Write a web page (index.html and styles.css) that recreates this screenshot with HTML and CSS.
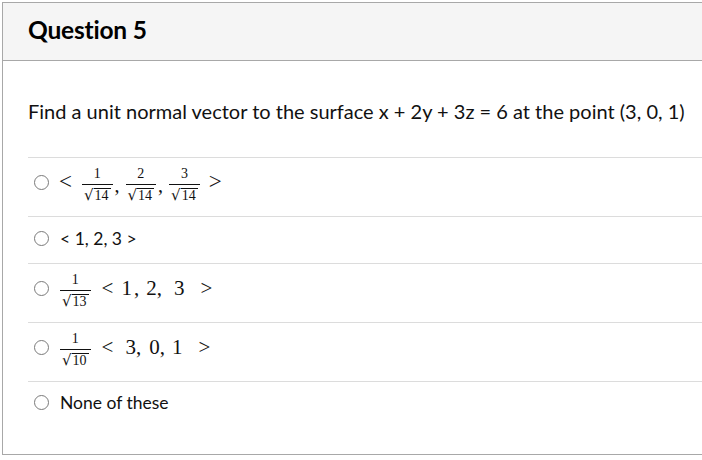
FILE: index.html
```html
<!DOCTYPE html>
<html>
<head>
<meta charset="utf-8">
<link rel="stylesheet" href="styles.css">
</head>
<body>
<div class="quiz">
  <div class="header"><h2 class="title">Question 5</h2></div>
  <div class="content">
    <p class="question">Find a unit normal vector to the surface x + 2y + 3z = 6 at the point (3, 0, 1)</p>
    <div class="answers">
      <div class="answer tall">
        <span class="radio"></span>
        <span class="math">
          <span class="op lt">&lt;</span>
          <span class="frac"><span class="num">1</span><span class="den"><span class="rad">√</span><span class="under">14</span></span></span><span class="comma">,</span>
          <span class="frac"><span class="num">2</span><span class="den"><span class="rad">√</span><span class="under">14</span></span></span><span class="comma">,</span>
          <span class="frac"><span class="num">3</span><span class="den"><span class="rad">√</span><span class="under">14</span></span></span>
          <span class="op gt">&gt;</span>
        </span>
      </div>
      <div class="answer short">
        <span class="radio"></span>
        <span class="label">&lt; 1, 2, 3 &gt;</span>
      </div>
      <div class="answer tall">
        <span class="radio"></span>
        <span class="math">
          <span class="frac"><span class="num">1</span><span class="den"><span class="rad">√</span><span class="under">13</span></span></span>
          <span class="expr"><span class="t">&lt;</span><span class="t s8">1</span><span class="t s2">,</span><span class="t s7">2,</span><span class="t s12">3</span><span class="t s16">&gt;</span></span>
        </span>
      </div>
      <div class="answer tall">
        <span class="radio"></span>
        <span class="math">
          <span class="frac"><span class="num">1</span><span class="den"><span class="rad">√</span><span class="under">10</span></span></span>
          <span class="expr"><span class="t">&lt;</span><span class="t s12">3,</span><span class="t s8">0,</span><span class="t s7">1</span><span class="t s16">&gt;</span></span>
        </span>
      </div>
      <div class="answer short last">
        <span class="radio"></span>
        <span class="label">None of these</span>
      </div>
    </div>
  </div>
</div>
</body>
</html>
```
FILE: styles.css
```css
html, body {
  margin: 0;
  padding: 0;
  background: #fff;
}
body {
  font-family: Lato, "Liberation Sans", sans-serif;
  color: #111;
}
.quiz {
  margin: 2px 0 0 2px;
  width: 720px;
  height: 453px;
  border: 1px solid #a8a8a8;
  box-sizing: border-box;
}
.header {
  height: 58px;
  background: #f5f5f5;
  border-bottom: 1px solid #a8a8a8;
  box-sizing: border-box;
  display: flex;
  align-items: center;
  padding-left: 25px;
  padding-bottom: 4px;
}
.title {
  margin: 0;
  font-size: 24.5px;
  font-weight: 700;
  color: #000;
  letter-spacing: -0.2px;
}
.content {
  padding-left: 25px;
}
.question {
  margin: 0;
  box-sizing: content-box;
  height: 57px;
  padding-top: 39px;
  font-size: 20px;
  line-height: 22px;
  color: #111;
}
.answer {
  border-top: 1px solid #dcdcdc;
  display: flex;
  align-items: center;
  box-sizing: border-box;
}
.answer.tall {
  height: 59px;
  padding-bottom: 10px;
}
.answer.short {
  height: 47px;
  padding-bottom: 4px;
}
.answer.short.last {
  padding-bottom: 6px;
}
.radio {
  width: 15px;
  height: 15px;
  border: 1px solid #7a7a7a;
  border-radius: 50%;
  box-sizing: border-box;
  margin-left: 6px;
  margin-right: 11px;
  flex: none;
}
.label {
  font-size: 17.5px;
}
.math {
  display: flex;
  align-items: center;
  font-family: "Liberation Serif", serif;
}
.op {
  font-size: 23px;
  line-height: 24px;
}
.op.lt {
  margin-left: -1px;
  margin-right: 10px;
}
.op.gt {
  margin-left: 9px;
}
.frac {
  display: inline-flex;
  flex-direction: column;
  align-items: center;
  font-size: 14px;
  margin-top: 5px;
}
.num {
  line-height: 14px;
  padding: 0 3px 3px;
  border-bottom: 1px solid #111;
  align-self: stretch;
  text-align: center;
}
.den {
  display: flex;
  align-items: flex-end;
  padding: 2px 2px 0;
}
.rad {
  font-family: "DejaVu Serif", serif;
  font-size: 15px;
  line-height: 16px;
}
.under {
  border-top: 1px solid #111;
  line-height: 14px;
  padding: 0 2px 0 1px;
}
.comma {
  font-size: 20px;
  margin: 6px 6px 0 2px;
}
.expr {
  display: flex;
  align-items: baseline;
  font-size: 21px;
  margin-left: 11px;
}
.t { display: inline-block; }
.s2 { margin-left: 2px; }
.s7 { margin-left: 7px; }
.s8 { margin-left: 8px; }
.s12 { margin-left: 12px; }
.s16 { margin-left: 16px; }
```
